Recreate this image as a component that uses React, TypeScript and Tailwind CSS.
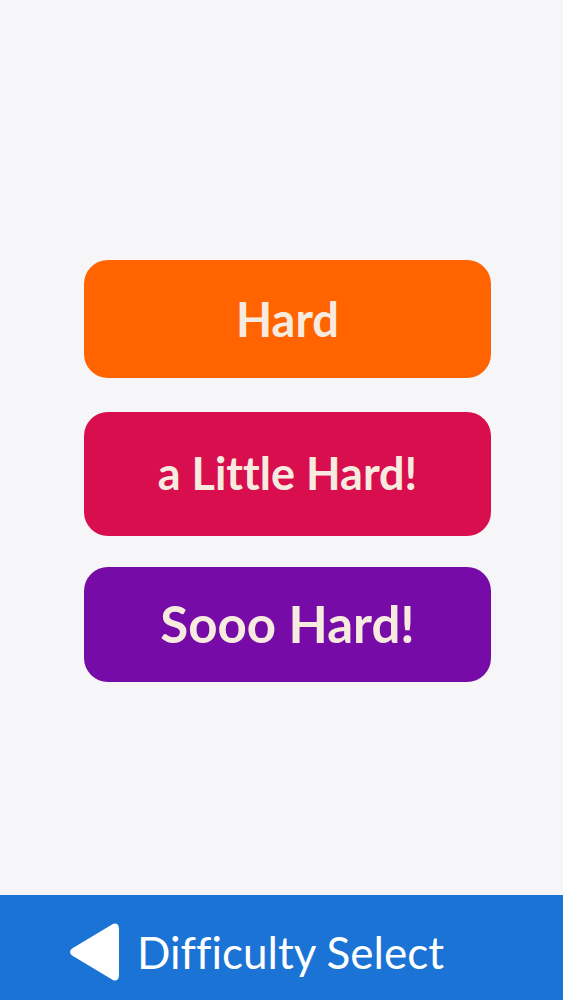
import React from 'react';

// ─── Difficulty buttons ─────────────────────────────────────────────────
interface IDifficultyButtonProps {
    label: string;
    className: string;
}

const DifficultyButton: React.FC<IDifficultyButtonProps> = ({ label, className }) => (
    <button
        className={`w-full flex items-center justify-center rounded-[24px] font-bold text-[#f7ebe0] [font-variant-ligatures:none] ${className}`}
    >
        {label}
    </button>
);

const BackArrow: React.FC = () => (
    <svg width="50" height="58" viewBox="0 0 50 58" className="shrink-0">
        <path
            d="M44 2 Q49 0 49 6 L49 52 Q49 58 44 56 L4 32 Q0 29 4 26 Z"
            fill="#ffffff"
            stroke="#ffffff"
            strokeWidth="2"
            strokeLinejoin="round"
        />
    </svg>
);

export default function App() {
    return (
        <div
            className="w-[563px] h-[1000px] flex flex-col bg-[#f6f6f8] overflow-hidden"
            style={{ fontFamily: 'Lato, "Noto Sans", sans-serif' }}
        >
            <div className="flex-1 flex flex-col pl-[84px] pr-[72px] pt-[260px]">
                <DifficultyButton label="Hard" className="h-[118px] bg-[#ff6400] text-[47px]" />
                <DifficultyButton label="a Little Hard!" className="h-[124px] mt-[34px] bg-[#d80e4e] text-[45px]" />
                <DifficultyButton label="Sooo Hard!" className="h-[115px] mt-[31px] bg-[#760ba8] text-[51px]" />
            </div>

            <div className="h-[105px] bg-[#1a73d5] flex items-center pl-[69px] pt-[8px] gap-[18px]">
                <BackArrow />
                <span className="text-white text-[44px] leading-none [font-variant-ligatures:none]">Difficulty Select</span>
            </div>
        </div>
    );
}
